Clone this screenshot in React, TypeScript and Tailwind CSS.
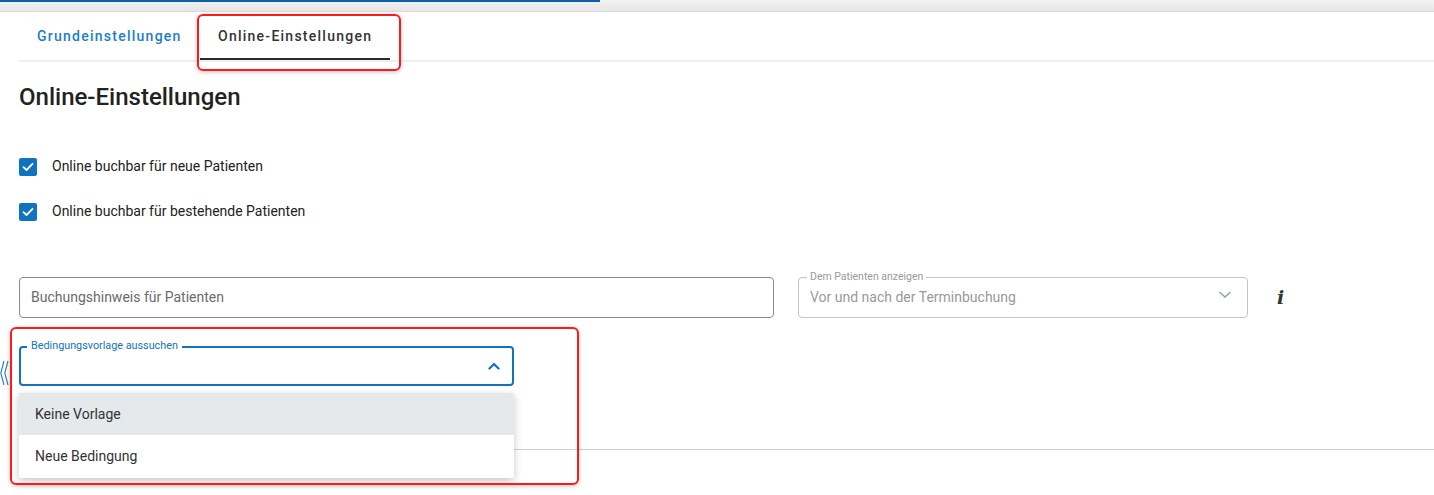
import React from "react";

function Check() {
  return (
    <span className="flex h-[18px] w-[18px] items-center justify-center rounded-[2px] bg-[#0f73c2]">
      <svg width="12" height="10" viewBox="0 0 12 10" fill="none">
        <path d="M1.5 5.2 L4.5 8 L10.5 1.8" stroke="white" strokeWidth="1.8" strokeLinecap="round" strokeLinejoin="round" />
      </svg>
    </span>
  );
}

export default function App() {
  return (
    <div className="relative h-[495px] w-full overflow-hidden bg-white font-['Roboto',sans-serif] text-[#222]">
      {/* top strip */}
      <div className="h-[12px] border-b border-[#dcdcdc] bg-gradient-to-b from-[#f3f3f3] to-[#e6e6e6]">
        <div className="h-[2px] w-[600px] bg-[#0b5ea8]" />
      </div>

      {/* tabs */}
      <div className="pl-[19px]">
        <div className="flex h-[48px] items-stretch">
          <div className="flex w-[181px] items-center pl-[18px] text-[14px] font-medium tracking-[1.25px] text-[#1a7fc9]">
            Grundeinstellungen
          </div>
          <div className="flex w-[190px] items-center border-b-2 border-[#2b2b2b] pl-[18px] pt-[2px] text-[14px] font-medium tracking-[1.25px] text-[#333]">
            Online-Einstellungen
          </div>
        </div>
        <div className="h-[2px] bg-[#f0f0f0]" />

        <h1 className="mt-[21px] text-[24px] font-medium leading-[28px] text-[#222]">Online-Einstellungen</h1>

        <div className="mt-[45px] flex flex-col gap-[24px]">
          <label className="flex items-center gap-[15px] text-[14px] text-[#222]">
            <Check />
            Online buchbar für neue Patienten
          </label>
          <label className="flex items-center gap-[15px] text-[14px] text-[#222]">
            <Check />
            Online buchbar für bestehende Patienten
          </label>
        </div>

        <div className="mt-[55px] flex items-center">
          <div className="flex h-[41px] w-[755px] items-center rounded-[4px] border border-[#8a8a8a] px-[11px] text-[14px] text-[#6b6b6b]">
            Buchungshinweis für Patienten
          </div>
          <div className="relative ml-[24px] flex h-[41px] w-[450px] items-center justify-between rounded-[4px] border border-[#c4c4c4] pl-[11px] pr-[16px] text-[14px] text-[#9a9a9a]">
            <span className="absolute left-[8px] top-[-8px] bg-white px-[3px] text-[10.5px] leading-[14px] text-[#9a9a9a]">
              Dem Patienten anzeigen
            </span>
            <span>Vor und nach der Terminbuchung</span>
            <svg width="12" height="8" viewBox="0 0 12 8" fill="none" className="mb-[6px]">
              <path d="M1 1.5 L6 6 L11 1.5" stroke="#8fa0ad" strokeWidth="1.5" strokeLinecap="round" />
            </svg>
          </div>
          <span className="ml-[29px] font-['DejaVu_Serif',serif] text-[19px] font-bold italic text-[#333]">i</span>
        </div>

        <div className="relative mt-[28px] w-[495px]">
          <div className="relative flex h-[40px] items-center justify-end rounded-[4px] border-2 border-[#0f73c2] pr-[12px]">
            <span className="absolute left-[6px] top-[-9px] bg-white px-[4px] text-[10.8px] leading-[14px] text-[#0f73c2]">
              Bedingungsvorlage aussuchen
            </span>
            <svg width="12" height="8" viewBox="0 0 12 8" fill="none">
              <path d="M1.5 6.5 L6 2 L10.5 6.5" stroke="#0f73c2" strokeWidth="2.2" strokeLinecap="round" />
            </svg>
          </div>
          <div className="absolute left-0 top-[47px] z-10 w-[495px] bg-white shadow-[0_3px_8px_rgba(0,0,0,0.22)]">
            <div className="flex h-[42px] items-center bg-[#e6e9ec] px-[16px] text-[14px] text-[#333]">Keine Vorlage</div>
            <div className="flex h-[43px] items-center px-[16px] text-[14px] text-[#333]">Neue Bedingung</div>
          </div>
        </div>

        <div className="mt-[63px] h-px bg-[#d0d0d0]" />
      </div>

      {/* collapse arrow */}
      <svg className="absolute left-0 top-[360px]" width="9" height="26" viewBox="0 0 9 26" fill="none">
        <path d="M4 1 L0.8 13 L4 25" stroke="#1a7fc9" strokeWidth="1.1" />
        <path d="M8 1 L4.8 13 L8 25" stroke="#1a7fc9" strokeWidth="1.1" />
      </svg>

      {/* red annotation boxes */}
      <div className="pointer-events-none absolute left-[197px] top-[14px] h-[57px] w-[204px] rounded-[6px] border-2 border-[#ff1a1a] shadow-[0_1px_4px_rgba(0,0,0,0.25)]" />
      <div className="pointer-events-none absolute left-[10px] top-[327px] z-20 h-[158px] w-[569px] rounded-[6px] border-2 border-[#ff1a1a] shadow-[0_1px_4px_rgba(0,0,0,0.25)]" />
    </div>
  );
}
